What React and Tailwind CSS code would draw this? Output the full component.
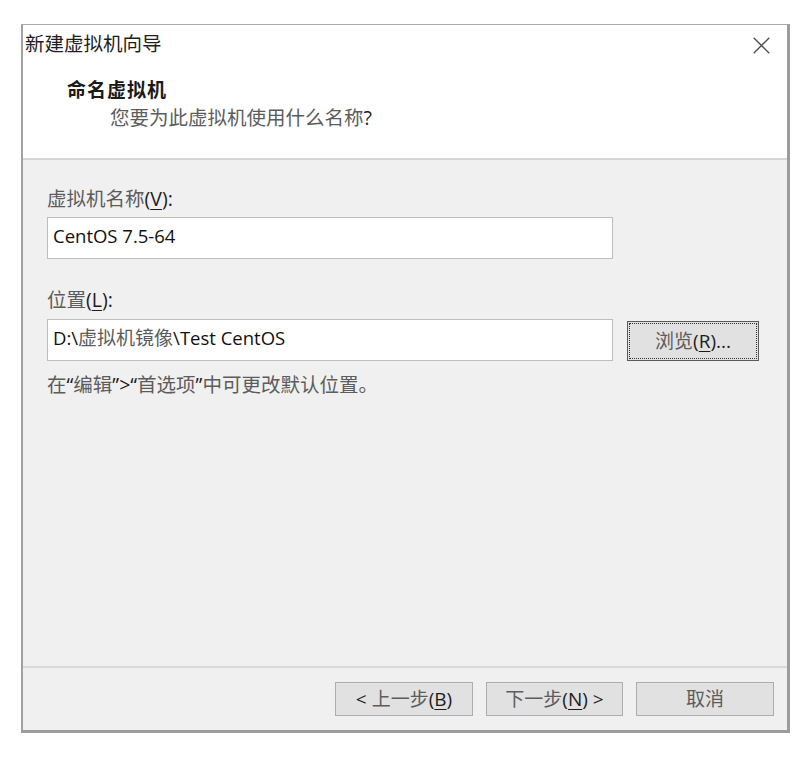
const U = ({ children }) => (
  <span className="underline underline-offset-[3px] decoration-1">{children}</span>
);

const L = ({ children }) => <span className="text-[#1c1c1c]">{children}</span>;

export default function App() {
  return (
    <div className="w-[803px] h-[762px] bg-white pt-[24px] pl-[21px] font-['Open_Sans','Noto_Sans_CJK_SC',sans-serif]">
      <div className="w-[769px] h-[709px] flex flex-col border-t border-l-2 border-r-[3px] border-b-[3px] border-t-[#ababab] border-l-[#a2a2a2] border-r-[#9c9c9c] border-b-[#9c9c9c]">
        {/* Header */}
        <div className="h-[135px] bg-white border-b-2 border-[#d6d6d6] flex flex-col">
          <div className="flex justify-between items-center h-[24px] mt-[7px] pl-[2px] pr-[17px]">
            <span className="text-[19.5px] leading-[24px] text-[#1e1e1e]">新建虚拟机向导</span>
            <svg width="17" height="17" viewBox="0 0 17 17" className="mt-[2px]">
              <path d="M0.7 0.7 L16.3 16.3 M16.3 0.7 L0.7 16.3" stroke="#4d4d4d" strokeWidth="1.3" fill="none" />
            </svg>
          </div>
          <div className="mt-[22px] pl-[44px] text-[19px] leading-[24px] font-bold tracking-[1px] text-[#1a1a1a]">命名虚拟机</div>
          <div className="mt-[4px] pl-[87px] text-[19.5px] leading-[24px] text-[#5c5c5c]">
            您要为此虚拟机使用什么名称<L>?</L>
          </div>
        </div>

        {/* Body */}
        <div className="flex-1 bg-[#f0f0f0] pl-[24px] pt-[27px] flex flex-col">
          <div className="text-[19.5px] leading-[24px] text-[#5c5c5c]">
            虚拟机名称<L>(<U>V</U>):</L>
          </div>
          <div className="mt-[6px] w-[566px] h-[42px] bg-white border border-[#bdbdbd] pl-[5px] pt-[6px] text-[18.5px] leading-[24px] text-[#111]">
            CentOS 7.5-64
          </div>

          <div className="mt-[29px] text-[19.5px] leading-[24px] text-[#5c5c5c]">
            位置<L>(<U>L</U>):</L>
          </div>
          <div className="mt-[7px] flex gap-[14px] items-start">
            <div className="w-[566px] h-[42px] bg-white border border-[#bdbdbd] pl-[5px] pt-[6px] text-[18.5px] leading-[24px] text-[#111]">
              D:\<span className="text-[19px] text-[#5c5c5c]">虚拟机镜像</span>\Test CentOS
            </div>
            <div className="mt-[2px] w-[132px] h-[40px] bg-[#e1e1e1] border border-[#5a5a5a] outline-1 outline-dotted outline-[#333] outline-offset-[-3px] flex items-center justify-center text-[19px] leading-[24px] text-[#5c5c5c]">
              浏览<L>(<U>R</U>)...</L>
            </div>
          </div>

          <div className="mt-[12px] text-[19.5px] leading-[24px] text-[#5c5c5c]">
            在<L>“</L>编辑<L>”&gt;“</L>首选项<L>”</L>中可更改默认位置。
          </div>
        </div>

        {/* Footer */}
        <div className="h-[64px] border-t-2 border-[#d8d8d8] bg-[#f0f0f0] flex justify-end gap-[13px] pt-[14px] pr-[13px]">
          <div className="w-[138px] h-[34px] bg-[#e1e1e1] border border-[#adadad] flex items-center justify-center text-[19px] leading-[24px] text-[#5c5c5c]">
            <L>&lt;&nbsp;</L>上一步<L>(<U>B</U>)</L>
          </div>
          <div className="w-[137px] h-[34px] bg-[#e1e1e1] border border-[#adadad] flex items-center justify-center text-[19px] leading-[24px] text-[#5c5c5c]">
            下一步<L>(<U>N</U>)&nbsp;&gt;</L>
          </div>
          <div className="w-[138px] h-[34px] bg-[#e1e1e1] border border-[#adadad] flex items-center justify-center text-[19px] leading-[24px] text-[#5c5c5c]">
            取消
          </div>
        </div>
      </div>
    </div>
  );
}
